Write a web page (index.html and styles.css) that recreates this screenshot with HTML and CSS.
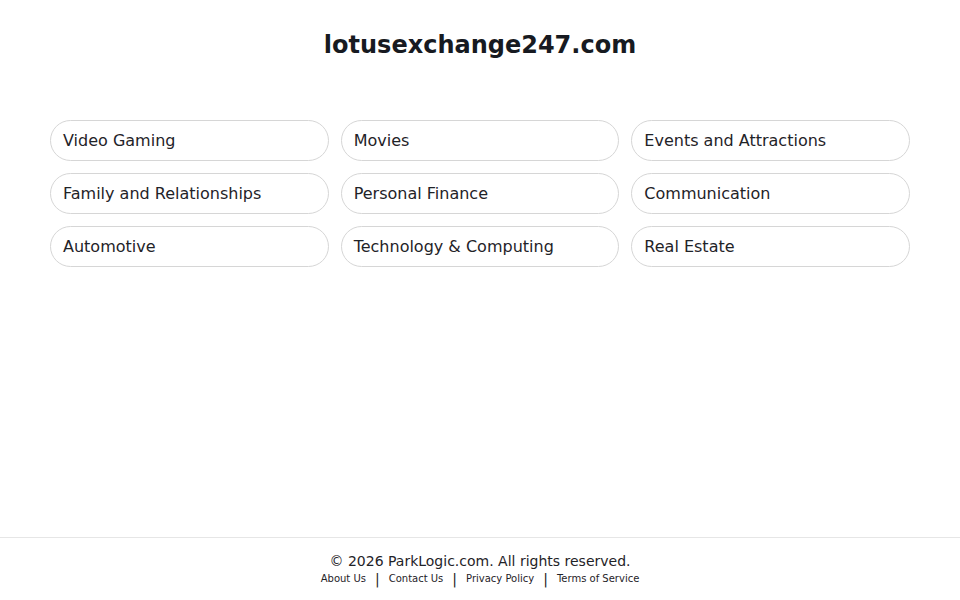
FILE: index.html
```html
<!DOCTYPE html>
<html lang="en">
<head>
  <meta charset="UTF-8" />
  <meta name="viewport" content="width=device-width, initial-scale=1.0"/>
  <title>lotusexchange247.com</title>
  <link rel="stylesheet" href="styles.css">
</head>
<body>

  <div class="page">
    <main class="content">
      <h1 class="domain">lotusexchange247.com</h1>

      <div class="topics">
        <a href="#" class="topic">Video Gaming</a>
        <a href="#" class="topic">Movies</a>
        <a href="#" class="topic">Events and Attractions</a>
        <a href="#" class="topic">Family and Relationships</a>
        <a href="#" class="topic">Personal Finance</a>
        <a href="#" class="topic">Communication</a>
        <a href="#" class="topic">Automotive</a>
        <a href="#" class="topic">Technology &amp; Computing</a>
        <a href="#" class="topic">Real Estate</a>
      </div>
    </main>

    <footer>
      <p>&copy; 2026 ParkLogic.com. All rights reserved.</p>
      <nav class="footer-links">
        <a href="#">About Us</a>
        <span class="sep">|</span>
        <a href="#">Contact Us</a>
        <span class="sep">|</span>
        <a href="#">Privacy Policy</a>
        <span class="sep">|</span>
        <a href="#">Terms of Service</a>
      </nav>
    </footer>
  </div>

</body>
</html>
```

FILE: styles.css
```css
:root {
  --text: #1f2328;
  --title: #171a21;
  --border: #d6d6d6;
  --line: #e6e6e6;
}

* {
  box-sizing: border-box;
  margin: 0;
  padding: 0;
}

body, html {
  font-family: "DejaVu Sans", Verdana, sans-serif;
  height: 100%;
  background: #fff;
  color: var(--text);
}

.page {
  min-height: 100vh;
  display: flex;
  flex-direction: column;
}

.content {
  flex: 1;
  padding: 0 50px;
}

.domain {
  text-align: center;
  font-size: 24px;
  line-height: 34px;
  font-weight: bold;
  color: var(--title);
  padding-top: 28px;
}

.topics {
  margin-top: 58px;
  display: grid;
  grid-template-columns: repeat(3, 1fr);
  gap: 12px;
}

.topic {
  display: block;
  height: 41px;
  line-height: 39px;
  padding: 0 12px;
  font-size: 16px;
  color: var(--text);
  text-decoration: none;
  border: 1px solid var(--border);
  border-radius: 21px;
  white-space: nowrap;
}

.topic:hover {
  background: #f7f7f7;
}

footer {
  border-top: 1px solid var(--line);
  text-align: center;
  padding: 14px 0 14px;
}

footer p {
  font-size: 14px;
  line-height: 18px;
}

.footer-links {
  display: flex;
  justify-content: center;
  align-items: center;
  height: 15px;
  margin-top: 1px;
}

.footer-links a {
  font-size: 10px;
  color: var(--text);
  text-decoration: none;
}

.footer-links .sep {
  font-size: 14px;
  margin: 0 9px;
}
```
